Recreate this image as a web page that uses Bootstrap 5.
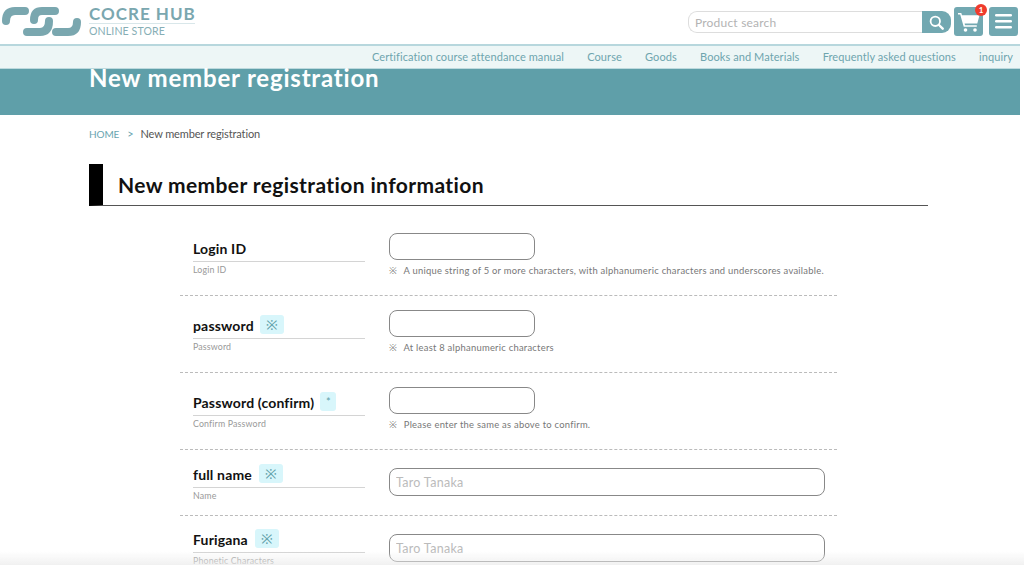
<!DOCTYPE html>
<html lang="en">
<head>
<meta charset="utf-8">
<title>New member registration</title>
<link href="https://cdn.jsdelivr.net/npm/bootstrap@5.3.0/dist/css/bootstrap.min.css" rel="stylesheet">
<style>
html,body{height:565px;overflow:hidden;background:#fff}
body{font-family:"Lato","Noto Sans",sans-serif;color:#333;width:1024px}
.site-head{height:44px;padding-right:6px}
.logo-mark{margin:0;display:block;flex:none}
.logo-words{color:#7aa7af;line-height:1;margin-left:7px;width:106px}
.logo-top{font-size:17px;font-weight:700;letter-spacing:1px;padding:6px 0 1px;border-bottom:1px solid #d9e7ea;white-space:nowrap;line-height:16px}
.logo-sub{font-size:10.6px;letter-spacing:.1px;padding-top:2px;white-space:nowrap;color:#86aeb5}
.site-tools{padding-top:7px}
.search-box{width:263px;height:22px;margin:4px 3px 0 0}
.search-box input{height:22px;font-size:12px;letter-spacing:.2px;border:1px solid #ddd;border-right:0;border-radius:9px 0 0 9px;padding:0 6px;flex:1;min-width:0;color:#333;outline:0}
.search-box input::placeholder{color:#b3b3b3}
.name-field::placeholder{color:#bbb}
.search-btn{width:29px;height:22px;background:#72a8b1;border-radius:0 9px 9px 0;border:0;padding:0}
.square-btn{width:29px;height:29px;background:#72a8b1;border-radius:3px;border:0;padding:0;margin-left:6px;position:relative}
.square-btn:first-of-type{margin-left:0}
.cart-count{position:absolute;top:-3px;right:-4px;width:12px;height:12px;background:#ef3b2d;color:#fff;border-radius:50%;font-size:8px;font-weight:700;line-height:12px;text-align:center}
.sub-nav{height:25px;width:1020px;background:#edf6f6;border-top:2px solid #b7d7dd;border-bottom:1px solid #bddade;font-size:11px;letter-spacing:.08px;padding-right:7px;gap:23.2px}
.sub-nav a{color:#6ea5ae;text-decoration:none;white-space:nowrap}
.hero-band{width:1020px;height:46px;background:#5f9fa9;color:#fff;padding-left:89px;overflow:visible}
.hero-band h1{font-size:24px;font-weight:700;letter-spacing:.8px;line-height:18px;margin:0;white-space:nowrap}
.crumbs{padding:12px 0 0 89px;font-size:11px;letter-spacing:-.13px;height:49px;line-height:14px;color:#555}
.crumbs a{color:#69a5b0;text-decoration:none;font-size:10px}
.crumbs i{font-style:normal;color:#69a5b0;margin:0 7px 0 8px}
.sect-head{margin:0 0 0 89px;width:839px;height:42px;border-bottom:1px solid #555;border-left:14px solid #000;padding-left:15px;font-size:21px;font-weight:700;color:#111;letter-spacing:.39px;line-height:41px}
.sect-head-text{margin:0;font:inherit}
.form-list{margin-left:180px;width:657px;padding-top:12px}
.form-line{border-bottom:1px dashed #bbb;padding:14px 12px 0 13px;display:flex}
.form-line.first-line{padding-top:15px;height:78px}
.h77{height:77px}.h66{height:66px}
.lab-col{width:172px;margin-right:24px;flex:none}
.lab-main{display:flex;align-items:flex-end;height:29px;border-bottom:1px solid #d4d4d4;font-size:14px;line-height:16px;font-weight:700;color:#111;letter-spacing:.16px;padding-bottom:4px;white-space:nowrap}
.h66 .lab-main{height:23px}
.h66.lower .lab-main{height:24px}
.lab-sub{font-size:8.8px;color:#999;letter-spacing:.16px;line-height:12px;padding-top:2px;white-space:nowrap}
.req-tag{background:#d8f6fb;color:#5f9fa9;border-radius:3px;width:24px;height:19px;font-size:14px;font-weight:400;line-height:19px;text-align:center;margin:0 0 0 6px;letter-spacing:0}
.h66 .req-tag{margin-left:7px}
.req-tag.thin{width:16px;font-size:11px;margin-left:6px}
.short-field{width:146px;height:27px;border:1px solid #888;border-radius:8px;display:block;outline:0}
.name-field{width:436px;height:28px;border:1px solid #888;border-radius:8px;display:block;outline:0;font-size:12.5px;letter-spacing:.3px;padding:0 6px;margin-top:4px}
.field-note{font-size:9.4px;color:#777;letter-spacing:.26px;line-height:12px;margin-top:5px;white-space:nowrap}
.field-note b{font-weight:400;margin-right:4px}
.page-fade{position:fixed;left:0;right:0;bottom:0;height:14px;background:linear-gradient(to bottom,rgba(235,235,235,0),rgba(235,235,235,.7));pointer-events:none}
</style>
</head>
<body>
<header class="site-head d-flex align-items-start">
  <svg class="logo-mark" width="82" height="38" viewBox="0 0 82 38" fill="none" stroke="#7aa7af" stroke-width="8" stroke-linecap="round" aria-hidden="true">
    <path d="M6 21Q6 11 15 11H25"/>
    <path d="M55 11H42Q34 11 34 20"/>
    <path d="M49 21Q49 32 40 32H27"/>
    <path d="M77 22Q77 32 68 32H56"/>
  </svg>
  <div class="logo-words">
    <div class="logo-top">COCRE HUB</div>
    <div class="logo-sub">ONLINE STORE</div>
  </div>
  <div class="ms-auto d-flex align-items-start site-tools">
    <form class="search-box d-flex">
      <input type="text" placeholder="Product search" aria-label="Product search">
      <button type="button" class="search-btn d-flex align-items-center justify-content-center" aria-label="Search">
        <svg width="15" height="15" viewBox="0 0 15 15" fill="none" stroke="#fff" stroke-linecap="round"><circle cx="6.300" cy="6.300" r="4.700" stroke-width="1.800"/><path d="M10 10l3.700 3.700" stroke-width="2.400"/></svg>
      </button>
    </form>
    <button type="button" class="square-btn d-flex align-items-center justify-content-center" aria-label="Cart">
      <svg width="24" height="22" viewBox="0 0 24 22" fill="#fff"><path d="M1 2h3.300l.7 2.300H22.500L20.300 12.500H7.600l.4 1.700H19.800v1.600H6.700L3.200 3.600H1z"/><circle cx="8.500" cy="19" r="1.800"/><circle cx="18" cy="19" r="1.800"/></svg>
      <span class="cart-count">1</span>
    </button>
    <button type="button" class="square-btn d-flex align-items-center justify-content-center" aria-label="Menu">
      <svg width="18" height="15" viewBox="0 0 18 15" fill="#fff"><rect y="0" width="17" height="2.400" rx="1.200"/><rect y="6" width="17" height="2.400" rx="1.200"/><rect y="12" width="17" height="2.400" rx="1.200"/></svg>
    </button>
  </div>
</header>
<nav class="sub-nav d-flex align-items-center justify-content-end">
  <a href="#">Certification course attendance manual</a>
  <a href="#">Course</a>
  <a href="#">Goods</a>
  <a href="#">Books and Materials</a>
  <a href="#">Frequently asked questions</a>
  <a href="#">inquiry</a>
</nav>
<section class="hero-band"><h1>New member registration</h1></section>
<div class="crumbs"><a href="#">HOME</a><i>&gt;</i>New member registration</div>
<div class="sect-head"><h2 class="sect-head-text">New member registration information</h2></div>
<form class="form-list">
  <div class="form-line first-line">
    <div class="lab-col"><div class="lab-main">Login ID</div><div class="lab-sub">Login ID</div></div>
    <div><input class="short-field" type="text" aria-label="Login ID"><div class="field-note"><b>※</b> A unique string of 5 or more characters, with alphanumeric characters and underscores available.</div></div>
  </div>
  <div class="form-line h77">
    <div class="lab-col"><div class="lab-main">password<span class="req-tag">※</span></div><div class="lab-sub">Password</div></div>
    <div><input class="short-field" type="password" aria-label="Password"><div class="field-note"><b>※</b> At least 8 alphanumeric characters</div></div>
  </div>
  <div class="form-line h77">
    <div class="lab-col"><div class="lab-main">Password (confirm)<span class="req-tag thin">*</span></div><div class="lab-sub">Confirm Password</div></div>
    <div><input class="short-field" type="password" aria-label="Confirm Password"><div class="field-note"><b>※</b> Please enter the same as above to confirm.</div></div>
  </div>
  <div class="form-line h66 lower">
    <div class="lab-col"><div class="lab-main">full name<span class="req-tag">※</span></div><div class="lab-sub">Name</div></div>
    <div><input class="name-field" type="text" placeholder="Taro Tanaka" aria-label="Name"></div>
  </div>
  <div class="form-line h66">
    <div class="lab-col"><div class="lab-main">Furigana<span class="req-tag">※</span></div><div class="lab-sub">Phonetic Characters</div></div>
    <div><input class="name-field" type="text" placeholder="Taro Tanaka" aria-label="Phonetic Characters"></div>
  </div>
</form>
<div class="page-fade"></div>
<script src="https://cdn.jsdelivr.net/npm/bootstrap@5.3.0/dist/js/bootstrap.bundle.min.js"></script>
</body>
</html>
